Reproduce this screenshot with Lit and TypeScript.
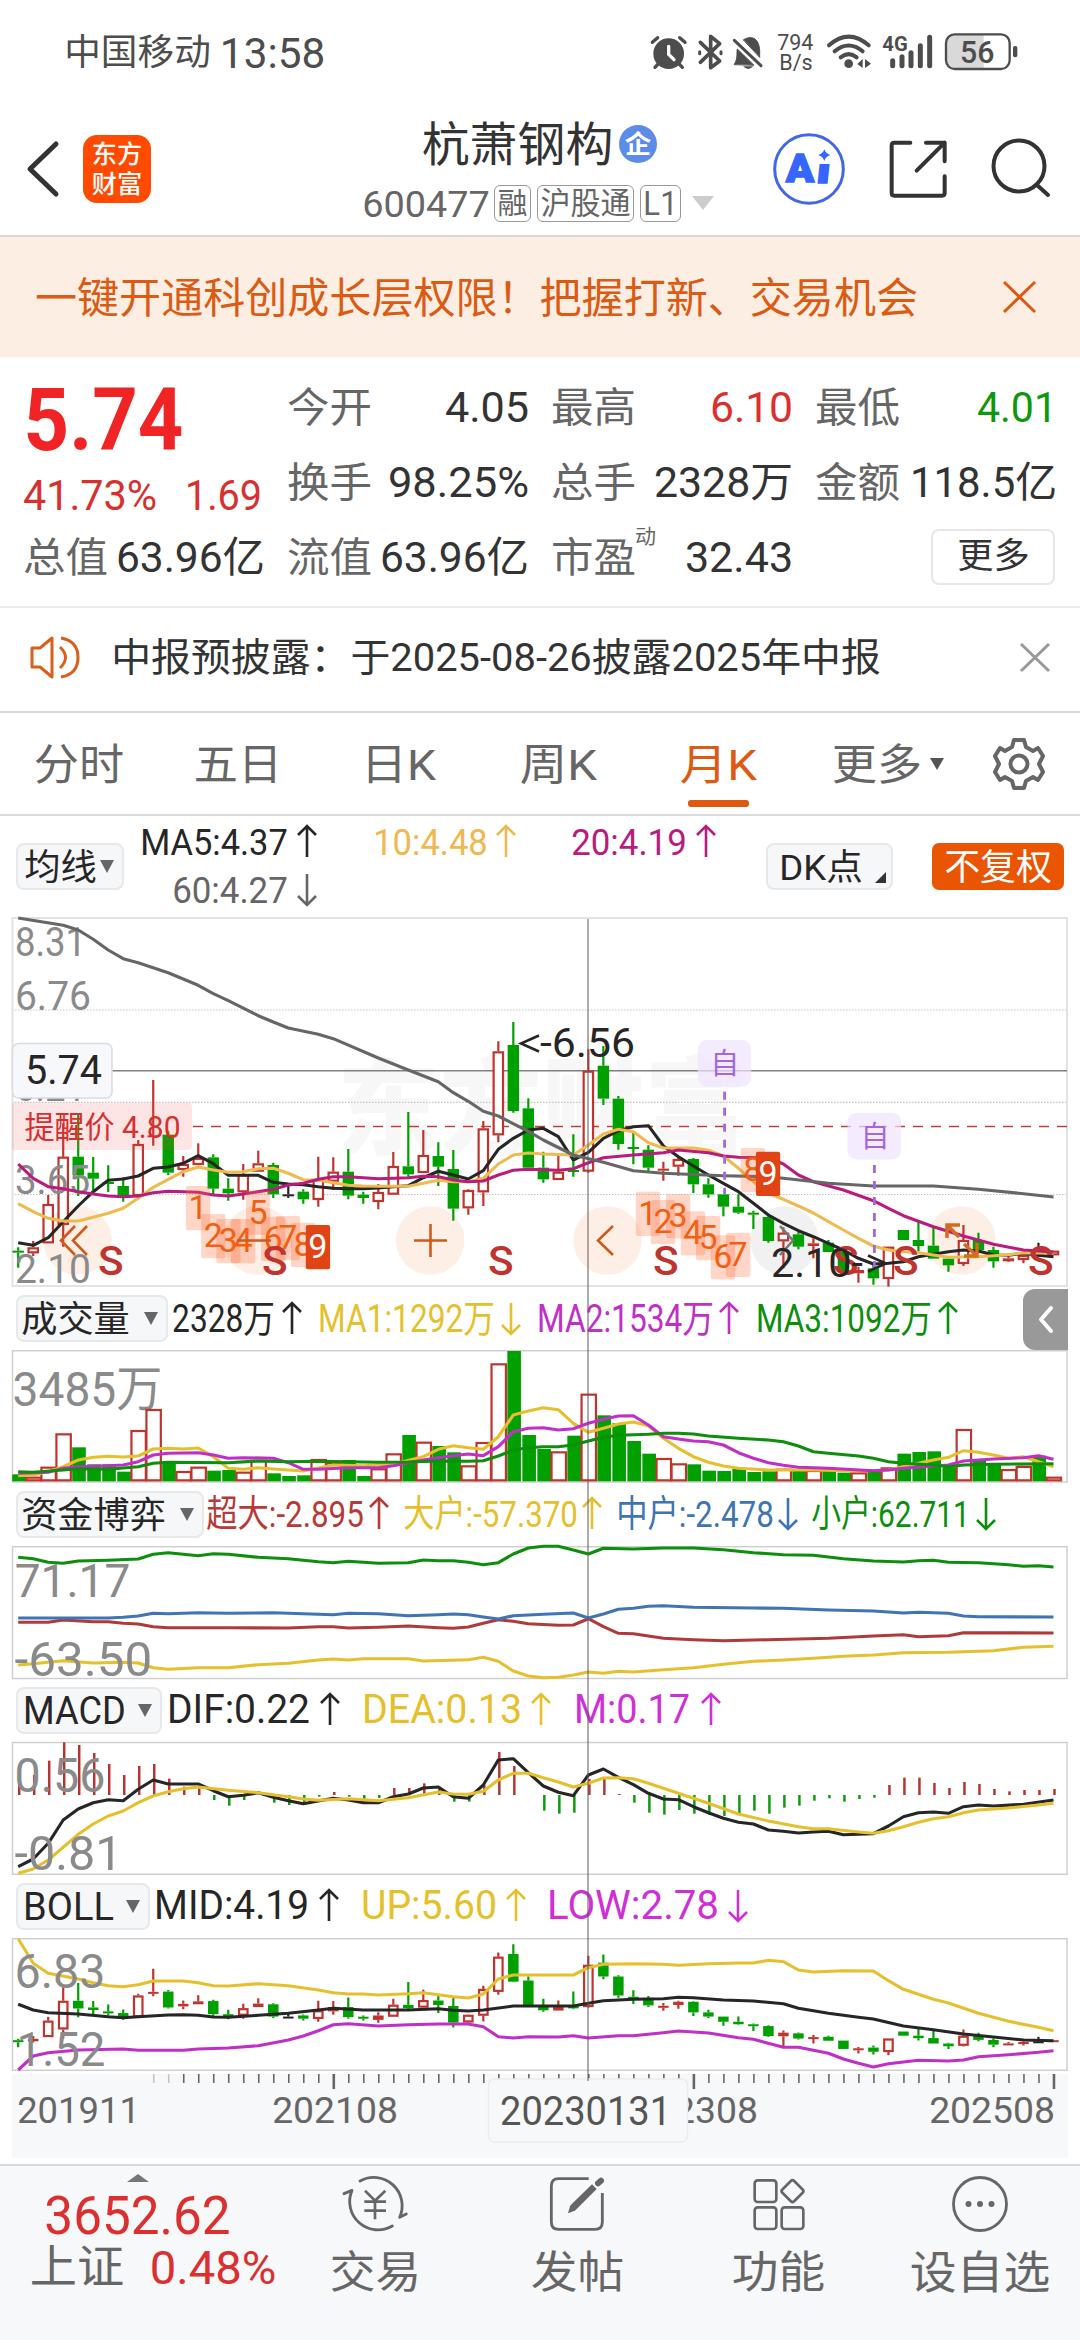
import { LitElement, html, svg, css } from "lit";
import { customElement, state } from "lit/decorators.js";

type Pt = [number, number];
type Candle = [string, number, number, number, number];
type Legend = { t: string; x: number; w: number; a: number; d: "up" | "down"; c: string; y?: number };

const RED = "#c0342f";
const GREEN = "#00a000";
const BLACK = "#262626";
const GOLD = "#e6c02c";
const PURPLE = "#c030c6";
const LEAF = "#0d8f0d";

const X0 = 18.2;
const STEP = 15.004;
const X = (i: number) => X0 + i * STEP;

/** Text of size s, drawn so that its ink is w wide. */
const fit = (t: string, w: number, s: number, cls = "", weight = 400) => html`<svg
  class="fit ${cls}" width=${w} height=${s * 1.2} viewBox="0 0 ${w} ${s * 1.2}">
  <text x=${-0.05 * s} y=${s * 0.97} font-size=${s} font-weight=${weight}
    textLength=${w + 0.1 * s} lengthAdjust="spacingAndGlyphs">${t}</text></svg>`;

const label = (t: string, x: number, base: number, w: number, s: number, c: string, weight = 400) => svg`<text
  x=${x - 0.05 * s} y=${base} font-size=${s} fill=${c} font-weight=${weight}
  textLength=${w + 0.1 * s} lengthAdjust="spacingAndGlyphs">${t}</text>`;

/** Series of [index, offset], where offsets are thirds of a pixel from the panel's origin. */
const line = (pts: Pt[], oy: number, c: string, w = 3.1) => svg`<polyline fill="none" stroke=${c}
  stroke-width=${w} stroke-linejoin="round"
  points=${pts.map(([i, v]) => `${X(i).toFixed(1)},${(oy + v / 3).toFixed(1)}`).join(" ")} />`;

const CANDLES: Candle[] = [
  ["g", 1022, 1026, 1012, 1073], ["r", 1012, 1030, 993, 1038], ["r", 882, 1000, 855, 1000], ["r", 740, 945, 640, 1010],
  ["g", 740, 795, 612, 858], ["g", 788, 806, 741, 840], ["g", 816, 822, 766, 846], ["g", 828, 858, 802, 875],
  ["r", 702, 858, 690, 858], ["r", 676, 682, 510, 707], ["g", 674, 788, 662, 795], ["r", 762, 780, 738, 800],
  ["r", 744, 765, 700, 765], ["g", 742, 836, 733, 852], ["g", 836, 850, 805, 872], ["r", 793, 847, 762, 869],
  ["r", 760, 785, 722, 785], ["g", 765, 853, 758, 864], ["k", 853, 857, 828, 864], ["g", 845, 868, 838, 881],
  ["r", 808, 870, 740, 890], ["r", 785, 815, 742, 840], ["g", 785, 857, 717, 868], ["g", 854, 864, 845, 881],
  ["r", 846, 876, 822, 898], ["r", 768, 854, 726, 854], ["g", 769, 793, 606, 800], ["r", 735, 789, 660, 789],
  ["g", 738, 770, 697, 828], ["g", 777, 896, 720, 932], ["r", 840, 895, 838, 914], ["r", 655, 847, 633, 888],
  ["r", 424, 676, 394, 697], ["g", 405, 603, 336, 608], ["g", 595, 773, 565, 773], ["g", 773, 808, 725, 818],
  ["r", 785, 810, 738, 810], ["g", 780, 784, 673, 800], ["r", 482, 785, 418, 788], ["g", 467, 566, 408, 585],
  ["g", 566, 702, 558, 719], ["g", 711, 715, 665, 763], ["g", 719, 773, 706, 785], ["r", 776, 780, 755, 812],
  ["r", 747, 770, 740, 797], ["g", 747, 823, 744, 849], ["g", 823, 853, 805, 863], ["g", 853, 890, 853, 919],
  ["g", 890, 908, 853, 912], ["g", 908, 914, 902, 957], ["g", 921, 993, 915, 998], ["r", 968, 994, 952, 1075],
  ["g", 973, 1010, 967, 1018], ["r", 1000, 1008, 985, 1045], ["g", 998, 1026, 990, 1026], ["g", 1025, 1085, 1025, 1085],
  ["r", 1080, 1090, 1070, 1118], ["g", 1075, 1105, 1060, 1124], ["r", 1010, 1107, 1010, 1130], ["g", 960, 990, 960, 990],
  ["g", 990, 1008, 935, 1025], ["g", 1007, 1046, 953, 1046], ["g", 1046, 1066, 1040, 1085], ["r", 990, 1062, 945, 1068],
  ["g", 990, 1020, 968, 1030], ["g", 1020, 1054, 1010, 1073], ["r", 1045, 1054, 1035, 1056], ["r", 1035, 1050, 1032, 1060],
  ["k", 1030, 1034, 998, 1040], ["r", 1022, 1036, 1022, 1036],
];

const MA60: Pt[] = [[0, 24], [3, 46], [4, 60], [5, 88], [6, 120], [7, 146], [8, 158], [10, 188], [12, 226], [13, 251], [14, 272], [16, 317], [17, 336], [18, 354], [20, 373], [21, 386], [24, 444], [26, 480], [28, 515], [29, 548], [30, 574], [31, 604], [32, 618], [34, 664], [35, 690], [37, 735], [39, 757], [41, 782], [43, 790], [47, 797], [50, 800], [51, 805], [54, 820], [57, 828], [61, 828], [64, 838], [67, 851], [69, 861]];
const MA5: Pt[] = [[0, 998], [1, 1006], [2, 983], [3, 935], [4, 888], [5, 845], [6, 811], [7, 807], [8, 798], [9, 775], [10, 771], [11, 760], [12, 737], [13, 761], [14, 796], [16, 796], [17, 817], [18, 822], [19, 824], [20, 830], [21, 835], [22, 836], [23, 836], [24, 834], [25, 830], [26, 827], [27, 803], [28, 784], [29, 795], [30, 807], [31, 782], [32, 718], [33, 685], [34, 660], [35, 655], [36, 680], [37, 750], [38, 727], [39, 685], [40, 662], [41, 650], [42, 647], [43, 708], [44, 740], [45, 768], [46, 795], [47, 820], [48, 845], [49, 880], [50, 915], [51, 940], [52, 962], [53, 980], [54, 1000], [55, 1020], [56, 1045], [57, 1062], [58, 1060], [59, 1055], [60, 1040], [61, 1033], [62, 1025], [63, 1020], [64, 1023], [65, 1035], [66, 1036], [67, 1030], [68, 1036], [69, 1040]];
const MA10: Pt[] = [[0, 881], [1, 905], [2, 925], [3, 933], [4, 933], [5, 922], [6, 910], [7, 895], [8, 865], [9, 832], [10, 808], [11, 785], [12, 771], [13, 780], [14, 787], [15, 785], [16, 776], [17, 775], [18, 790], [19, 809], [20, 810], [21, 818], [22, 826], [23, 828], [24, 829], [26, 829], [27, 820], [28, 811], [29, 815], [30, 815], [31, 805], [32, 762], [33, 735], [34, 729], [35, 732], [37, 735], [38, 705], [39, 672], [40, 658], [41, 665], [42, 698], [43, 714], [45, 714], [46, 721], [47, 738], [48, 775], [49, 815], [50, 850], [51, 868], [52, 888], [53, 909], [54, 935], [55, 960], [56, 985], [57, 1008], [58, 1020], [59, 1025], [60, 1028], [61, 1035], [62, 1042], [64, 1040], [65, 1037], [66, 1034], [67, 1028], [68, 1029], [69, 1030]];
const MA20: Pt[] = [[0, 762], [1, 805], [2, 830], [3, 836], [4, 845], [5, 852], [6, 858], [7, 860], [8, 858], [9, 848], [10, 844], [12, 847], [13, 855], [14, 858], [15, 852], [17, 838], [18, 825], [19, 820], [20, 808], [21, 800], [22, 800], [24, 806], [26, 803], [27, 799], [28, 800], [29, 810], [30, 815], [31, 813], [32, 795], [33, 781], [34, 778], [36, 781], [37, 776], [38, 758], [39, 743], [41, 735], [43, 728], [44, 720], [46, 728], [47, 738], [48, 742], [50, 744], [51, 762], [52, 795], [53, 815], [55, 840], [57, 872], [58, 895], [59, 917], [61, 950], [63, 978], [65, 1003], [67, 1020], [69, 1026]];

const VOLUME = [583, 590, 560, 460, 502, 553, 553, 575, 450, 387, 547, 573, 560, 572, 570, 575, 540, 580, 588, 586, 537, 547, 540, 588, 565, 520, 465, 485, 498, 517, 556, 486, 250, 213, 465, 507, 514, 467, 341, 406, 430, 483, 521, 534, 550, 553, 572, 573, 566, 576, 574, 566, 571, 570, 572, 578, 577, 575, 562, 521, 516, 514, 562, 447, 540, 553, 567, 558, 527, 590];
const V1: Pt[] = [[0, 587], [1, 585], [2, 575], [3, 560], [4, 540], [5, 532], [6, 529], [7, 531], [8, 528], [9, 507], [10, 505], [11, 507], [12, 504], [13, 530], [14, 565], [15, 568], [16, 563], [17, 567], [19, 573], [21, 555], [23, 557], [25, 552], [27, 530], [28, 508], [29, 497], [30, 503], [31, 508], [32, 470], [33, 405], [34, 393], [35, 383], [36, 389], [37, 430], [38, 457], [39, 445], [40, 432], [41, 426], [42, 437], [43, 475], [44, 505], [45, 530], [46, 547], [47, 558], [48, 565], [50, 570], [53, 570], [56, 573], [58, 570], [60, 550], [61, 540], [62, 532], [63, 512], [64, 517], [65, 525], [66, 535], [67, 530], [68, 545], [69, 560]];
const V2: Pt[] = [[0, 580], [2, 577], [3, 565], [4, 560], [6, 557], [7, 555], [8, 545], [9, 525], [10, 520], [12, 518], [13, 525], [14, 535], [15, 533], [17, 535], [18, 548], [19, 568], [20, 568], [22, 563], [24, 563], [25, 557], [26, 548], [27, 540], [28, 533], [29, 527], [30, 522], [31, 527], [32, 500], [33, 455], [34, 445], [35, 443], [36, 450], [37, 446], [38, 430], [39, 418], [40, 408], [41, 407], [42, 435], [43, 470], [44, 477], [45, 483], [46, 485], [47, 495], [48, 518], [49, 535], [50, 548], [51, 556], [52, 562], [54, 565], [57, 572], [58, 570], [59, 565], [61, 558], [62, 555], [63, 543], [65, 537], [67, 533], [68, 527], [69, 538]];
const V3: Pt[] = [[0, 575], [1, 577], [3, 570], [4, 566], [6, 568], [8, 560], [9, 550], [10, 547], [14, 548], [16, 543], [18, 545], [20, 544], [22, 545], [24, 547], [26, 546], [28, 543], [30, 544], [31, 542], [32, 528], [33, 510], [34, 503], [35, 500], [36, 500], [37, 495], [38, 483], [39, 472], [40, 466], [42, 463], [43, 460], [44, 460], [45, 462], [46, 468], [48, 475], [50, 480], [51, 485], [52, 498], [53, 515], [54, 520], [56, 528], [57, 535], [58, 545], [59, 550], [61, 555], [62, 560], [63, 555], [65, 553], [69, 551]];

const F_SMALL: Pt[] = [[0, 202], [1, 206], [2, 217], [3, 220], [4, 213], [6, 211], [8, 207], [9, 193], [10, 188], [12, 197], [13, 191], [14, 193], [16, 202], [18, 206], [20, 215], [21, 218], [22, 214], [24, 220], [26, 218], [27, 210], [28, 212], [29, 212], [30, 217], [31, 224], [32, 218], [33, 192], [34, 174], [35, 169], [36, 169], [37, 180], [38, 192], [39, 175], [41, 177], [43, 174], [45, 174], [47, 179], [49, 188], [51, 194], [53, 196], [55, 206], [57, 213], [59, 216], [60, 212], [61, 211], [62, 217], [64, 218], [66, 224], [67, 229], [68, 227], [69, 231]];
const F_MID: Pt[] = [[0, 384], [6, 384], [7, 382], [8, 378], [9, 370], [10, 371], [12, 368], [14, 370], [17, 368], [20, 373], [21, 374], [22, 370], [24, 371], [26, 377], [28, 374], [29, 372], [30, 374], [31, 381], [32, 387], [33, 377], [35, 373], [37, 369], [38, 384], [39, 372], [40, 358], [41, 355], [42, 349], [43, 347], [45, 352], [49, 354], [51, 355], [54, 360], [57, 363], [59, 369], [60, 367], [62, 370], [63, 378], [64, 380], [69, 381]];
const F_SUPER: Pt[] = [[0, 397], [2, 397], [3, 390], [5, 395], [6, 395], [7, 400], [8, 402], [9, 410], [10, 413], [14, 413], [18, 414], [20, 410], [21, 410], [22, 414], [24, 412], [26, 408], [28, 413], [29, 415], [30, 411], [31, 400], [32, 389], [33, 394], [34, 401], [36, 406], [37, 405], [38, 386], [39, 410], [40, 430], [41, 431], [43, 445], [45, 449], [47, 452], [50, 449], [54, 445], [57, 438], [59, 434], [60, 440], [62, 437], [63, 428], [69, 429]];
const F_BIG: Pt[] = [[0, 525], [1, 521], [3, 512], [5, 519], [7, 517], [8, 519], [9, 533], [10, 538], [12, 533], [14, 533], [16, 524], [18, 520], [20, 510], [21, 507], [22, 510], [23, 506], [26, 506], [27, 513], [30, 509], [31, 502], [32, 514], [33, 543], [34, 558], [35, 563], [36, 562], [37, 555], [38, 546], [39, 550], [40, 544], [41, 546], [43, 539], [45, 533], [47, 523], [49, 514], [51, 510], [53, 505], [55, 499], [57, 495], [59, 488], [62, 487], [65, 482], [67, 472], [69, 469]];

const BARS: Pt[] = [[0, 250], [1, 255], [2, 212], [3, 157], [4, 165], [5, 189], [6, 222], [7, 255], [8, 228], [9, 222], [10, 266], [11, 290], [12, 287], [13, 330], [14, 347], [15, 330], [17, 338], [18, 345], [19, 342], [20, 320], [21, 306], [22, 320], [23, 335], [24, 324], [25, 294], [26, 294], [27, 280], [28, 290], [29, 335], [30, 335], [31, 285], [32, 186], [33, 228], [35, 362], [36, 371], [37, 368], [38, 267], [39, 262], [40, 312], [41, 338], [42, 368], [43, 374], [44, 360], [45, 371], [46, 374], [47, 378], [48, 370], [49, 362], [50, 371], [51, 353], [52, 347], [53, 332], [54, 325], [55, 335], [56, 327], [57, 323], [58, 285], [59, 263], [60, 263], [61, 279], [62, 294], [63, 276], [64, 282], [65, 297], [66, 304], [67, 300], [68, 300], [69, 297]];
const DIF: Pt[] = [[0, 530], [1, 507], [2, 460], [3, 390], [4, 357], [5, 338], [6, 329], [7, 332], [8, 298], [9, 270], [10, 282], [12, 282], [13, 302], [14, 320], [15, 316], [16, 308], [17, 322], [18, 332], [19, 341], [20, 333], [21, 325], [22, 330], [23, 338], [24, 338], [25, 320], [26, 312], [27, 294], [28, 291], [29, 320], [30, 325], [31, 285], [32, 210], [33, 206], [34, 248], [35, 288], [36, 307], [37, 317], [38, 255], [39, 237], [40, 262], [41, 284], [42, 310], [43, 327], [44, 329], [45, 350], [46, 368], [47, 385], [48, 397], [49, 402], [50, 420], [51, 424], [52, 429], [53, 426], [54, 424], [55, 434], [57, 431], [58, 408], [59, 380], [60, 368], [61, 366], [62, 370], [63, 350], [64, 345], [65, 348], [67, 343], [69, 330]];
const DEA: Pt[] = [[0, 550], [1, 537], [2, 510], [3, 472], [4, 433], [5, 402], [6, 378], [7, 363], [8, 338], [9, 318], [10, 305], [11, 296], [12, 291], [14, 301], [16, 308], [18, 320], [19, 327], [20, 331], [22, 326], [24, 332], [26, 323], [28, 306], [29, 312], [30, 313], [31, 304], [32, 270], [33, 250], [34, 250], [35, 263], [36, 276], [37, 291], [38, 280], [39, 264], [40, 263], [41, 266], [42, 280], [44, 310], [46, 340], [48, 372], [50, 393], [52, 410], [53, 416], [54, 416], [56, 426], [57, 430], [58, 422], [59, 410], [60, 397], [61, 386], [62, 380], [63, 368], [64, 360], [66, 354], [68, 345], [69, 340]];

const UP: Pt[] = [[0, 176], [1, 250], [2, 280], [4, 297], [5, 308], [6, 317], [7, 320], [8, 314], [9, 303], [11, 303], [12, 308], [13, 317], [14, 318], [16, 311], [18, 317], [20, 330], [21, 338], [22, 342], [23, 342], [24, 345], [26, 341], [27, 338], [29, 350], [30, 354], [31, 342], [32, 297], [33, 285], [37, 285], [38, 263], [39, 253], [41, 251], [43, 253], [44, 256], [46, 251], [48, 249], [49, 249], [50, 241], [51, 245], [52, 270], [53, 276], [55, 272], [57, 273], [58, 302], [59, 328], [60, 343], [61, 358], [62, 369], [64, 400], [66, 424], [68, 442], [69, 452]];
const MID: Pt[] = [[0, 373], [1, 390], [2, 398], [4, 402], [6, 410], [7, 413], [8, 410], [10, 405], [11, 404], [12, 406], [13, 411], [14, 412], [16, 406], [18, 400], [20, 390], [21, 385], [23, 390], [26, 390], [28, 386], [29, 391], [30, 393], [31, 390], [33, 378], [37, 378], [38, 370], [39, 362], [41, 358], [43, 356], [44, 352], [45, 353], [47, 360], [49, 363], [51, 371], [52, 385], [54, 400], [56, 412], [57, 417], [59, 438], [61, 449], [63, 462], [65, 471], [67, 480], [69, 482]];
const LOW: Pt[] = [[0, 570], [1, 528], [2, 518], [4, 510], [7, 507], [8, 511], [11, 511], [12, 507], [14, 504], [16, 497], [18, 480], [19, 468], [20, 452], [21, 434], [22, 431], [24, 438], [26, 434], [28, 432], [30, 432], [31, 440], [32, 470], [33, 474], [34, 470], [36, 471], [37, 467], [38, 474], [40, 467], [41, 467], [43, 458], [44, 453], [46, 459], [48, 473], [49, 478], [51, 502], [52, 502], [54, 520], [55, 537], [56, 550], [57, 561], [58, 551], [60, 541], [62, 543], [63, 540], [64, 530], [66, 524], [68, 517], [69, 512]];

/** Nine-count markers: digit, left edge, top edge. */
const COUNTS: [string, number, number][] = [
  ["1", 185.9, 1186], ["2", 201.1, 1214], ["3", 216.3, 1219], ["4", 231, 1219], ["5", 245.9, 1190.7], ["6", 261, 1216.7],
  ["7", 275.8, 1216], ["8", 291, 1222.7], ["9", 305.8, 1225],
  ["1", 635.8, 1191.7], ["2", 650.9, 1200], ["3", 666, 1194.3], ["4", 680.8, 1211.3], ["5", 696, 1216], ["6", 710.8, 1235.3],
  ["7", 726, 1232.7], ["8", 740.8, 1148], ["9", 755.9, 1151.7],
];

const color = (k: string) => (k === "r" ? RED : k === "g" ? GREEN : BLACK);

const candles = (map: (v: number) => number, w: number) => CANDLES.map(([k, top, bottom, high, low], i) => {
  const x = X(i);
  const c = color(k);
  const t = map(top);
  const h = Math.max(map(bottom) - t, 2);
  const hollow = k === "r" && h > 4;
  return svg`<path d="M${x} ${map(high)}V${t}M${x} ${t + h}V${Math.max(map(low), t + h)}" stroke=${c} stroke-width="2.2" />
    ${hollow
      ? svg`<rect x=${x - w / 2 + 1} y=${t + 1} width=${w - 2} height=${h - 2} fill="#fff" stroke=${c} stroke-width="2.2" />`
      : svg`<rect x=${x - w / 2} y=${t} width=${w} height=${h} fill=${c} />`}`;
});

const frame = (y: number, h: number) => svg`<rect x="12.5" y=${y} width="1054.5" height=${h} fill="none" stroke="#cfcfcf" stroke-width="1.5" />`;

const legend = (items: Legend[], x: number, w: number, y: number, h: number, size: number, base: number) => html`
  <svg class="legend" width=${w} height=${h} viewBox="${x} ${y} ${w} ${h}">
    ${items.map((it) => {
      const b = it.y ?? base;
      const top = b - 29;
      const bot = b + 2;
      const a = it.a;
      return svg`${label(it.t, it.x, b, it.w, size, it.c)}
        <path d=${it.d === "up" ? `M${a} ${bot}V${top}M${a - 9} ${top + 9}L${a} ${top}L${a + 9} ${top + 9}` : `M${a} ${top}V${bot}M${a - 9} ${bot - 9}L${a} ${bot}L${a + 9} ${bot - 9}`}
          fill="none" stroke=${it.c} stroke-width="2.6" />`;
    })}
  </svg>`;

@customElement("app-root")
export class AppRoot extends LitElement {
  @state() private tab = 4;

  static styles = css`
    :host { display: block; width: 1080px; height: 2340px; overflow: hidden; background: #fff; color: #333;
      font-family: Roboto, "Noto Sans CJK SC", sans-serif; }
    * { box-sizing: border-box; }
    svg { display: block; flex: none; overflow: visible; }
    svg text { font-family: Roboto, "Noto Sans CJK SC", sans-serif; white-space: pre; }
    .fit text { fill: currentColor; }
    .row { display: flex; align-items: center; }
    .status { height: 96px; padding: 8px 61px 0 66px; color: #4d4d4d; justify-content: space-between; }
    .carrier { gap: 13px; }
    .header { height: 141px; padding: 6px 29px 0 27px; border-bottom: 2px solid #d9d9d9; }
    .left { gap: 24px; width: 337px; }
    .brand { width: 68px; height: 68px; border-radius: 14px; background: #ff4a00; color: #fff; display: flex; flex-direction: column;
      align-items: center; justify-content: center; }
    .title { display: flex; flex-direction: column; gap: 12px; margin-right: auto; }
    .name { gap: 8px; padding-left: 60px; height: 57px; }
    .firm { width: 38px; height: 38px; border-radius: 50%; background: #5d8ce8; color: #fff; display: flex; align-items: center; justify-content: center; }
    .code { gap: 6px; color: #666; height: 38px; }
    .tag { height: 37px; border: 1.5px solid #999; border-radius: 6px; padding: 0 4px; display: flex; align-items: center; }
    .caret { margin-left: 5px; }
    .tools { gap: 44px; }
    .banner { height: 120px; background: #fdeee4; color: #dc5a12; padding: 0 44px 0 37px; justify-content: space-between; }
    .quote { height: 251px; padding: 12px 25px 0; border-bottom: 2px solid #ececec; display: grid; grid-template-columns: repeat(4, 238px);
      grid-template-rows: repeat(3, 75px); column-gap: 26px; }
    .price { grid-row: span 2; color: #f02424; }
    .price .big { margin: -4px 0 0 3px; }
    .change { color: #d83030; gap: 32px; margin-top: -2px; }
    .cell { justify-content: space-between; color: #333; }
    .cell .k { color: #666; }
    .cell .red { color: #dc2f2f; }
    .cell .green { color: #0d980d; }
    .keys { display: flex; align-items: flex-start; color: #666; gap: 2px; }
    .keys .sup { margin-top: -7px; }
    .more { justify-content: flex-end; }
    .morebtn { width: 124px; height: 56px; border: 2px solid #e6e6e6; border-radius: 8px; justify-content: center; padding-bottom: 3px; }
    .notice { height: 105px; padding: 0 30px 4px; border-bottom: 2px solid #d9d9d9; }
    .notice .msg { margin: 0 auto 0 33px; }
    .tabs { height: 103px; display: grid; grid-template-columns: 158px 160px 161px 159px 160px 182px 77px; border-bottom: 2px solid #dcdcdc; color: #666; }
    .tab { display: flex; align-items: center; justify-content: center; gap: 10px; position: relative; }
    .tab.on { color: #dc5a12; }
    .tab.on::after { content: ""; position: absolute; bottom: 7px; width: 61px; height: 7px; border-radius: 3px; background: #dc5a12; }
    .charts { position: relative; height: 1348px; }
    .head { height: 61px; padding-left: 16px; }
    .head.top { height: 101px; padding-right: 16px; }
    .head.top .legend { margin-right: auto; }
    .pick { height: 47px; border: 2px solid #e6e8ea; border-radius: 8px; background: #f6f7f9; padding: 0 5px; justify-content: space-between; color: #262626; flex: none; }
    .pick .latin { margin-top: -2px; }
    .p0 { width: 108px; padding: 0 8px; }
    .p1 { width: 152px; padding-right: 8px; }
    .p2 { width: 188px; padding-right: 8px; }
    .p3 { width: 146px; padding: 0 8px 0 7px; }
    .p4 { width: 134px; padding: 0 8px 0 7px; }
    .dk { width: 127px; padding: 0 5px 0 13px; margin-right: 39px; }
    .dk .corner { align-self: flex-end; margin-bottom: 5px; }
    .adj { width: 132px; height: 47px; border-radius: 7px; background: #ea5504; color: #fff; justify-content: center; flex: none; }
    .panel { margin-left: 12px; }
    .cross { position: absolute; left: 586.5px; top: 103px; width: 2px; height: 1162px; background: rgba(90, 90, 90, .5); }
    .drawer { position: absolute; left: 1023px; top: 473px; width: 45px; height: 61px; border-radius: 12px 0 0 12px; background: #999;
      display: flex; align-items: center; justify-content: center; }
    .footer { height: 176px; border-top: 2px solid #d3d9de; background: #f7f8fa; color: #666; display: grid;
      grid-template-columns: 274px 202px 202px 201px 201px; }
    .index { display: flex; flex-direction: column; padding: 8px 0 0 32px; }
    .index .num { color: #dc2f2f; margin: 1px 0 0 15px; }
    .index .up { margin-left: 95px; }
    .index .sub { gap: 30px; margin-top: -9px; }
    .index .pct { color: #dc2f2f; }
    .act { display: flex; flex-direction: column; align-items: center; padding-top: 7px; }
    .act .ico { height: 62px; display: flex; align-items: center; }
    .act .fit { margin-top: 10px; }
  `;

  private statusBar() {
    return html`<div class="row status">
      <div class="row carrier">${fit("中国移动", 143, 36)}${fit("13:58", 101, 43)}</div>
      <svg width="368" height="38" viewBox="34 36 1104 114" fill="#4d4d4d" stroke="none">
        <g stroke="#4d4d4d" stroke-linecap="round">
          <circle cx="87" cy="98" r="46" stroke="none" />
          <path d="M38 64L54 50M136 64L120 50" stroke-width="10" fill="none" />
          <path d="M58 126L46 139M116 126L128 139" stroke-width="10" />
          <path d="M87 76V100L103 116" stroke="#fff" stroke-width="10" fill="none" />
          <path d="M182 64L240 120L213 140V46L240 68L182 124" fill="none" stroke-width="11" stroke-linejoin="round" />
          <path d="M180 92v6M244 92v6" stroke-width="9" />
          <path d="M284 130C296 112 290 96 293 84L342 132ZM312 56C340 40 358 56 360 88V108Z" stroke-width="3" />
          <path d="M284 58L364 134" stroke-width="9" />
          <path d="M310 136H341Q326 152 310 136Z" stroke="none" />
        </g>
        ${label("794", 416, 88, 102, 64, "#4d4d4d")}
        ${label("B/s", 422, 147, 94, 64, "#4d4d4d")}
        <g fill="none" stroke="#4d4d4d" stroke-width="12" stroke-linecap="round">
          <path d="M568 73Q627 21 687 73M585 91Q627 56 669 91M603 109Q627 90 651 109" />
        </g>
        <circle cx="627" cy="128" r="13" />
        <path d="M653 129L669 114V141ZM676 141V114L694 128Z" />
        ${label("4G", 731, 89, 70, 62, "#4d4d4d", 700)}
        <g stroke="#4d4d4d" stroke-width="15" stroke-linecap="round"><path d="M759 119V134M787 107V134M814 95V134M842 74V134M870 49V134" /></g>
        <path d="M936 42H1032V142H936Q922 142 922 120V64Q922 42 936 42Z" fill="#d9d9d9" />
        <rect x="919" y="40" width="191" height="104" rx="26" fill="none" stroke="#4d4d4d" stroke-width="7" />
        ${label("56", 966, 125, 94, 92, "#4d4d4d", 500)}
        <rect x="1120" y="75" width="13" height="34" rx="6" />
      </svg>
    </div>`;
  }

  private header() {
    return html`<div class="row header">
      <div class="row left">
        <svg width="32" height="56" viewBox="0 0 32 56"><path d="M29 3L3 28L29 53" fill="none" stroke="#333" stroke-width="5" stroke-linecap="round" stroke-linejoin="round" /></svg>
        <div class="brand">${fit("东方", 48, 25, "", 500)}${fit("财富", 48, 25, "", 500)}</div>
      </div>
      <div class="title">
        <div class="row name">${fit("杭萧钢构", 187, 47)}<div class="firm">${fit("企", 24, 25, "", 700)}</div></div>
        <div class="row code">${fit("600477", 124, 37)}
          <div class="tag">${fit("融", 27, 29)}</div><div class="tag">${fit("沪股通", 87, 31)}</div><div class="tag">${fit("L1", 31, 33)}</div>
          <svg class="caret" width="22" height="14" viewBox="0 0 22 14"><path d="M0 0H22L11 14Z" fill="#ccc" /></svg>
        </div>
      </div>
      <div class="row tools">
        <svg width="72" height="72" viewBox="398 340 216 216">
          <circle cx="506" cy="448" r="103" fill="none" stroke="#4267e8" stroke-width="9" />
          ${svg`<text x="437" y="487" font-size="118" font-weight="900" fill="#3766ff" stroke="#3766ff" stroke-width="5" textLength="84" lengthAdjust="spacingAndGlyphs">A</text>
          <text x="526" y="491" font-size="104" font-weight="900" fill="#3766ff" stroke="#3766ff" stroke-width="4" textLength="42" lengthAdjust="spacingAndGlyphs" transform="skewX(-6) translate(51 0)">ı</text>`}
          <path d="M552 389Q556 402 570 406Q556 411 552 424Q548 411 534 406Q548 402 552 389Z" fill="#3766ff" />
        </svg>
        <svg width="58" height="58" viewBox="742 361 174 174" fill="none" stroke="#333" stroke-width="12" stroke-linecap="round" stroke-linejoin="round">
          <path d="M806 369H758Q750 369 750 377V520Q750 528 758 528H901Q909 528 909 520V470M853 369H909V425M909 369L825 453" /></svg>
        <svg width="60" height="60" viewBox="0 0 60 60" fill="none" stroke="#333" stroke-width="4" stroke-linecap="round"><circle cx="28" cy="27" r="25.5" /><path d="M46 46L57 56" /></svg>
      </div>
    </div>`;
  }

  private cell(k: string, v: string, w: number, cls = "") {
    return html`<div class="row cell">${fit(k, 81, 41, "k")}${fit(v, w, 42, cls)}</div>`;
  }

  private quote() {
    return html`<div class="quote">
      <div class="price">
        ${fit("5.74", 151, 88, "big", 700)}
        <div class="row change">${fit("41.73%", 130, 42)}${fit("1.69", 73, 42)}</div>
      </div>
      ${this.cell("今开", "4.05", 80)}${this.cell("最高", "6.10", 79, "red")}${this.cell("最低", "4.01", 76, "green")}
      ${this.cell("换手", "98.25%", 137)}${this.cell("总手", "2328万", 135)}${this.cell("金额", "118.5亿", 143)}
      ${this.cell("总值", "63.96亿", 145)}${this.cell("流值", "63.96亿", 145)}
      <div class="row cell"><div class="keys">${fit("市盈", 81, 41)}${fit("动", 19, 20, "sup")}</div>${fit("32.43", 104, 42)}</div>
      <div class="row more"><div class="row morebtn">${fit("更多", 69, 35)}</div></div>
    </div>`;
  }

  private tabs() {
    const names: [string, number][] = [["分时", 86], ["五日", 84], ["日K", 71], ["周K", 73], ["月K", 73]];
    return html`<div class="tabs">
      ${names.map(([n, w], i) => html`<div class="tab ${i === this.tab ? "on" : ""}" @click=${() => (this.tab = i)}>${fit(n, w, 43)}</div>`)}
      <div class="tab">${fit("更多", 86, 43)}<svg width="14" height="12" viewBox="0 0 14 12"><path d="M0 0H14L7 12Z" fill="#555" /></svg></div>
      <div class="tab"><svg width="52" height="54" viewBox="-26 -27 52 54" fill="none" stroke="#666" stroke-width="4" stroke-linejoin="round">
        <path d="M-5 -24H5L7 -17L14 -13L19 -16L24 -8L20 0L24 8L19 16L14 13L7 17L5 24H-5L-7 17L-14 13L-19 16L-24 8L-20 0L-24 -8L-19 -16L-14 -13L-7 -17Z" /><circle r="8.5" /></svg></div>
    </div>`;
  }

  private pick(t: string, w: number, cls: string) {
    const latin = /^[A-Z]/.test(t);
    return html`<div class="row pick ${cls}">${fit(t, w, latin ? 38 : 36, latin ? "latin" : "")}
      <svg width="14" height="13" viewBox="0 0 14 13"><path d="M0 0H14L7 13Z" fill="#666" /></svg></div>`;
  }

  private mainChart() {
    const y = (v: number) => 910 + v / 3;
    const gray = "#8a8a8a";
    const S: number[] = [100, 264, 490, 655, 835, 895, 1030];
    return html`<svg class="panel" width="1056" height="371" viewBox="12 917 1056 371">
      ${svg`<text x="337" y="1146" font-size="106" font-weight="900" fill="#f7f7f7" textLength="410" lengthAdjust="spacingAndGlyphs">东方财富</text>`}
      ${[1010, 1102.3, 1194.5].map((g) => svg`<path d="M12 ${g}H1067" stroke="#c4c4c4" stroke-width="1.2" stroke-dasharray="1.5 1.5" />`)}
      ${svg`<rect x="12.5" y="918" width="1054.5" height="368" fill="none" stroke="#e2e2e2" stroke-width="2" />`}
      ${[[77.5, "#feefe6"], [258, "#feefe6"], [430.2, "#feefe6"], [607.5, "#feefe6"], [784.5, "#f1f1f1"], [961.5, "#feefe6"]].map(([cx, c]) => svg`<circle cx=${cx} cy="1240.5" r="34.3" fill=${c} />`)}
      ${label("8.31", 17, 956, 67, 41, gray)}${label("6.76", 17, 1010, 72, 41, gray)}${label("5.21", 17, 1101, 67, 41, gray)}
      ${svg`<path d="M193 1126.6H1067" stroke="#c2403c" stroke-width="1.5" stroke-dasharray="10 8" />
      <path d="M112 1070.7H1067" stroke="#808080" stroke-width="1.4" />`}
      ${candles(y, 11.4)}
      ${label("3.65", 17, 1194, 71, 41, gray)}${label("2.10", 17, 1283, 72, 41, gray)}
      ${line(MA5, 910, BLACK)}${line(MA10, 910, "#efba50")}${line(MA20, 910, "#b91c7d")}${line(MA60, 910, "#666")}
      ${COUNTS.map(([d, x, t]) => svg`<rect x=${x} y=${t} width="24.3" height="44.3" rx="2" fill=${d === "9" ? "#e04414" : "rgba(255,105,50,.27)"} />
        <text x=${x + 12.1} y=${t + 33} text-anchor="middle" font-size="34" fill=${d === "9" ? "#fff" : "#f06010"}>${d}</text>`)}
      ${svg`<g fill="none" stroke="#cf5a1c" stroke-width="2.6">
        <path d="M75 1226L61 1240.5L75 1255M87 1226L73 1240.5L87 1255M237 1240.5H271M414 1240.5H447M430.5 1224V1257M613 1226L598 1240.5L613 1255" />
        <path d="M780 1226L793 1240.5L780 1255" stroke="#777" />
        <path d="M960 1225H947V1238M947 1225L959 1237M964 1244L977 1256M964 1256H977V1243" stroke="#d86a20" stroke-width="3.5" />
      </g>`}
      ${S.map((x) => label("S", x, 1274.5, 21.5, 41, RED, 500))}
      ${svg`<g stroke="#a368df" stroke-width="2.8" stroke-dasharray="8 8"><path d="M724.6 1091.7V1194M874.4 1165V1268" /></g>
      <rect x="697.7" y="1040" width="53.5" height="46.7" rx="9" fill="rgba(240,226,254,.7)" /><rect x="847.5" y="1112.7" width="53.5" height="46.7" rx="9" fill="rgba(240,226,254,.7)" />
      <text x="724.8" y="1073.5" text-anchor="middle" font-size="29" fill="#a368df">自</text>
      <text x="875" y="1146.5" text-anchor="middle" font-size="29" fill="#a368df">自</text>
      <path d="M539 1035.5L521 1043.5L539 1051.5" fill="none" stroke="#262626" stroke-width="2.6" />
      <path d="M868 1255.5L886 1263.5L868 1271.5" fill="none" stroke="#262626" stroke-width="2.6" />`}
      ${label("-6.56", 542, 1057, 91, 41, BLACK)}
      ${label("2.10-", 773, 1277, 88, 41, BLACK)}
      ${svg`<path d="M12 1102.7H188Q192 1102.7 192 1107V1146Q192 1150 188 1150H12Z" fill="rgba(246,70,70,.14)" />`}
      ${label("提醒价 4.80", 26, 1138, 153, 31, "#d83030")}
      ${svg`<rect x="12.5" y="1043.5" width="99.5" height="54.5" rx="6" fill="#f7f8fb" stroke="#d8dce0" stroke-width="1.5" />`}
      ${label("5.74", 27, 1084, 73, 41, BLACK)}
    </svg>`;
  }

  private volumeChart() {
    const base = 1280 + 604 / 3;
    return html`<svg class="panel" width="1056" height="135" viewBox="12 1349 1056 135">
      ${frame(1350.7, 131.3)}${label("3485万", 15, 1406, 145, 49, "#8a8a8a")}
      ${VOLUME.map((v, i) => {
        const t = 1280 + v / 3;
        const x = X(i);
        return CANDLES[i][0] === "r"
          ? svg`<rect x=${x - 6.8} y=${t + 1} width="14.4" height=${Math.max(base - t - 2, 1)} fill="#fff" stroke=${RED} stroke-width="2.2" />`
          : svg`<rect x=${x - 6} y=${t} width="13.6" height=${base - t} fill=${GREEN} />`;
      })}
      ${line(V1, 1280, GOLD)}${line(V2, 1280, PURPLE)}${line(V3, 1280, LEAF)}
    </svg>`;
  }

  private fundChart() {
    return html`<svg class="panel" width="1056" height="135" viewBox="12 1545 1056 135">
      ${frame(1546.7, 131.8)}
      ${line(F_SMALL, 1490, LEAF)}${line(F_SUPER, 1490, "#b03a3a")}${line(F_MID, 1490, "#3f74b5")}${line(F_BIG, 1490, GOLD)}
      ${label("71.17", 17, 1597, 111, 46, "#8a8a8a")}${label("-63.50", 17, 1676, 133, 48, "#8a8a8a")}
    </svg>`;
  }

  private macdChart() {
    return html`<svg class="panel" width="1056" height="135" viewBox="12 1741 1056 135">
      ${frame(1742.5, 131.8)}
      ${BARS.map(([i, v]) => svg`<path d="M${X(i) + 1} 1795V${1690 + v / 3}" stroke=${v < 315 ? "#b83434" : "#109a10"} stroke-width="2.5" />`)}
      ${line(DIF, 1690, BLACK)}${line(DEA, 1690, GOLD)}
      ${label("0.56", 17, 1792, 86, 48, "#8a8a8a")}${label("-0.81", 17, 1870, 103, 48, "#8a8a8a")}
    </svg>`;
  }

  private bollChart() {
    const y = (v: number) => 1880 + (222 + (v - 405) * 0.419) / 3;
    return html`<svg class="panel" width="1056" height="135" viewBox="12 1937 1056 135">
      ${frame(1938.7, 131.6)}${candles(y, 10.5)}
      ${line(UP, 1880, GOLD)}${line(MID, 1880, BLACK)}${line(LOW, 1880, PURPLE)}
      ${label("6.83", 17, 1988, 86, 48, "#8a8a8a")}${label("1.52", 19, 2066, 84, 48, "#8a8a8a")}
    </svg>`;
  }

  private axis() {
    const ticks = Array.from({ length: 61 }, (_, k) => k + 9);
    return html`<svg class="panel" width="1056" height="92" viewBox="12 2072 1056 92">
      <rect x="12" y="2074" width="1056" height="84" fill="#f7f8fa" />
      ${ticks.map((i) => {
        const major = i === 21 || i === 45 || i === 69;
        return svg`<path d="M${X(i) + 0.5} 2074V${major ? 2089 : 2083}" stroke=${i < 11 ? "#c4c4c4" : "#666"} stroke-width=${major ? 2.6 : 1.6} />`;
      })}
      ${label("201911", 19, 2123, 119, 37, "#666")}${label("202108", 274, 2123, 122, 37, "#666")}
      ${label("202308", 634, 2123, 122, 37, "#666")}${label("202508", 931, 2123, 122, 37, "#666")}
      ${svg`<rect x="488.5" y="2079" width="199" height="63" rx="6" fill="#f7f8fa" stroke="#ececee" stroke-width="1.5" />`}
      ${label("20230131", 502, 2124.5, 167, 40, "#555")}
    </svg>`;
  }

  private charts() {
    return html`<div class="charts">
      <div class="row head top">${this.pick("均线", 69, "p0")}
        ${legend([
          { t: "MA5:4.37", x: 142, w: 144, a: 307, d: "up", c: BLACK },
          { t: "10:4.48", x: 375, w: 111, a: 506, d: "up", c: "#f0b850" },
          { t: "20:4.19", x: 573, w: 112, a: 706, d: "up", c: "#b91c7d" },
          { t: "60:4.27", x: 174, w: 112, a: 307, d: "down", c: "#666", y: 903 },
        ], 124, 620, 816, 101, 36, 855)}
        <div class="row pick dk">${fit("DK点", 80, 36)}<svg class="corner" width="11" height="11" viewBox="0 0 11 11"><path d="M11 0V11H0Z" fill="#333" /></svg></div>
        <div class="row adj">${fit("不复权", 104, 36)}</div>
      </div>
      ${this.mainChart()}
      <div class="row head">${this.pick("成交量", 105, "p1")}
        ${legend([
          { t: "2328万", x: 174, w: 99, a: 292, d: "up", c: BLACK },
          { t: "MA1:1292万", x: 320, w: 173, a: 511, d: "down", c: GOLD },
          { t: "MA2:1534万", x: 539, w: 173, a: 729, d: "up", c: PURPLE },
          { t: "MA3:1092万", x: 758, w: 172, a: 948, d: "up", c: LEAF },
        ], 168, 850, 1288, 61, 38, 1332)}
      </div>
      ${this.volumeChart()}
      <div class="row head">${this.pick("资金博弈", 141, "p2")}
        ${legend([
          { t: "超大:-2.895", x: 208, w: 154, a: 379, d: "up", c: "#b83a38" },
          { t: "大户:-57.370", x: 405, w: 171, a: 592, d: "up", c: GOLD },
          { t: "中户:-2.478", x: 618, w: 154, a: 788, d: "down", c: "#3f74b5" },
          { t: "小户:62.711", x: 813, w: 155, a: 986, d: "down", c: LEAF },
        ], 204, 850, 1484, 61, 37, 1527)}
      </div>
      ${this.fundChart()}
      <div class="row head">${this.pick("MACD", 99, "p3")}
        ${legend([
          { t: "DIF:0.22", x: 169, w: 139, a: 330, d: "up", c: BLACK },
          { t: "DEA:0.13", x: 364, w: 156, a: 541, d: "up", c: GOLD },
          { t: "M:0.17", x: 576, w: 112, a: 711, d: "up", c: "#cf2fd6" },
        ], 162, 850, 1680, 61, 40, 1723)}
      </div>
      ${this.macdChart()}
      <div class="row head">${this.pick("BOLL", 87, "p4")}
        ${legend([
          { t: "MID:4.19", x: 156, w: 151, a: 329, d: "up", c: BLACK },
          { t: "UP:5.60", x: 363, w: 132, a: 516, d: "up", c: GOLD },
          { t: "LOW:2.78", x: 549, w: 168, a: 738, d: "down", c: "#cf2fd6" },
        ], 150, 850, 1876, 61, 40, 1919)}
      </div>
      ${this.bollChart()}
      ${this.axis()}
      <div class="cross"></div>
      <div class="drawer"><svg width="14" height="27" viewBox="0 0 14 27"><path d="M12 2L2 13.5L12 25" fill="none" stroke="#fff" stroke-width="4" stroke-linecap="round" stroke-linejoin="round" /></svg></div>
    </div>`;
  }

  private footer() {
    return html`<div class="footer">
      <div class="index">
        <svg class="up" width="22" height="8" viewBox="0 0 22 8"><path d="M0 8L11 0L22 8Z" fill="#777" /></svg>
        ${fit("3652.62", 181, 53, "num")}
        <div class="row sub">${fit("上证", 90, 45)}${fit("0.48%", 122, 47, "pct")}</div>
      </div>
      <div class="act"><div class="ico"><svg width="66" height="60" viewBox="97 27 198 180" fill="none" stroke="#666" stroke-width="8.5" stroke-linecap="round" stroke-linejoin="round">
        <path d="M151 48A85 85 0 0 1 270 157L290 147M248 183A85 85 0 0 1 127 76L103 86" />
        <path d="M169 80L196 107L224 80M168 110H225M168 137H225M196 107V159" stroke-linecap="square" stroke-width="8" /></svg></div>${fit("交易", 87, 44)}</div>
      <div class="act"><div class="ico"><svg width="56" height="56" viewBox="717 33 168 168" fill="none" stroke="#666" stroke-width="8.5">
        <path d="M836 41H746Q724 41 724 63V171Q724 193 746 193H855Q877 193 877 171V84" />
        <path d="M774 145L780 124Q782 120 786 116L846 58L860 72L800 132Q796 136 792 138Z" fill="#666" stroke="none" />
        <path d="M864 55L873 47" stroke-width="18" stroke-linecap="round" /></svg></div>${fit("发帖", 89, 44)}</div>
      <div class="act"><div class="ico"><svg width="54" height="54" viewBox="1323 34 162 162" fill="none" stroke="#666" stroke-width="8" stroke-linejoin="round">
        <rect x="1331" y="44" width="65" height="65" rx="9" /><rect x="1331" y="125" width="65" height="65" rx="9" /><rect x="1412" y="125" width="65" height="65" rx="9" />
        <rect x="1419.5" y="51.5" width="50" height="50" rx="7" transform="rotate(45 1444.5 76.5)" /></svg></div>${fit("功能", 89, 44)}</div>
      <div class="act"><div class="ico"><svg width="58" height="58" viewBox="0 0 58 58" fill="#666"><circle cx="29" cy="29" r="26.5" fill="none" stroke="#666" stroke-width="2.8" />
        <circle cx="17.5" cy="29" r="3" /><circle cx="29" cy="29" r="3" /><circle cx="40.5" cy="29" r="3" /></svg></div>${fit("设自选", 136, 45)}</div>
    </div>`;
  }

  render() {
    return html`
      ${this.statusBar()}
      ${this.header()}
      <div class="row banner">${fit("一键开通科创成长层权限！把握打新、交易机会", 879, 42)}
        <svg width="33" height="32" viewBox="0 0 33 32"><path d="M1 1L32 31M32 1L1 31" stroke="#dc5a12" stroke-width="3" /></svg></div>
      ${this.quote()}
      <div class="row notice">
        <svg width="50" height="43" viewBox="0 0 50 43" fill="none" stroke="#d8601c" stroke-width="3" stroke-linejoin="round">
          <path d="M22 2L10 12H2V31H10L22 41ZM30 11Q41 21.5 30 32M31 2Q48 5 48 21.5Q48 38 31 41" /></svg>
        ${fit("中报预披露：于2025-08-26披露2025年中报", 766, 38.5, "msg")}
        <svg width="30" height="29" viewBox="0 0 30 29"><path d="M1 1L29 28M29 1L1 28" stroke="#999" stroke-width="3" /></svg>
      </div>
      ${this.tabs()}
      ${this.charts()}
      ${this.footer()}`;
  }
}
